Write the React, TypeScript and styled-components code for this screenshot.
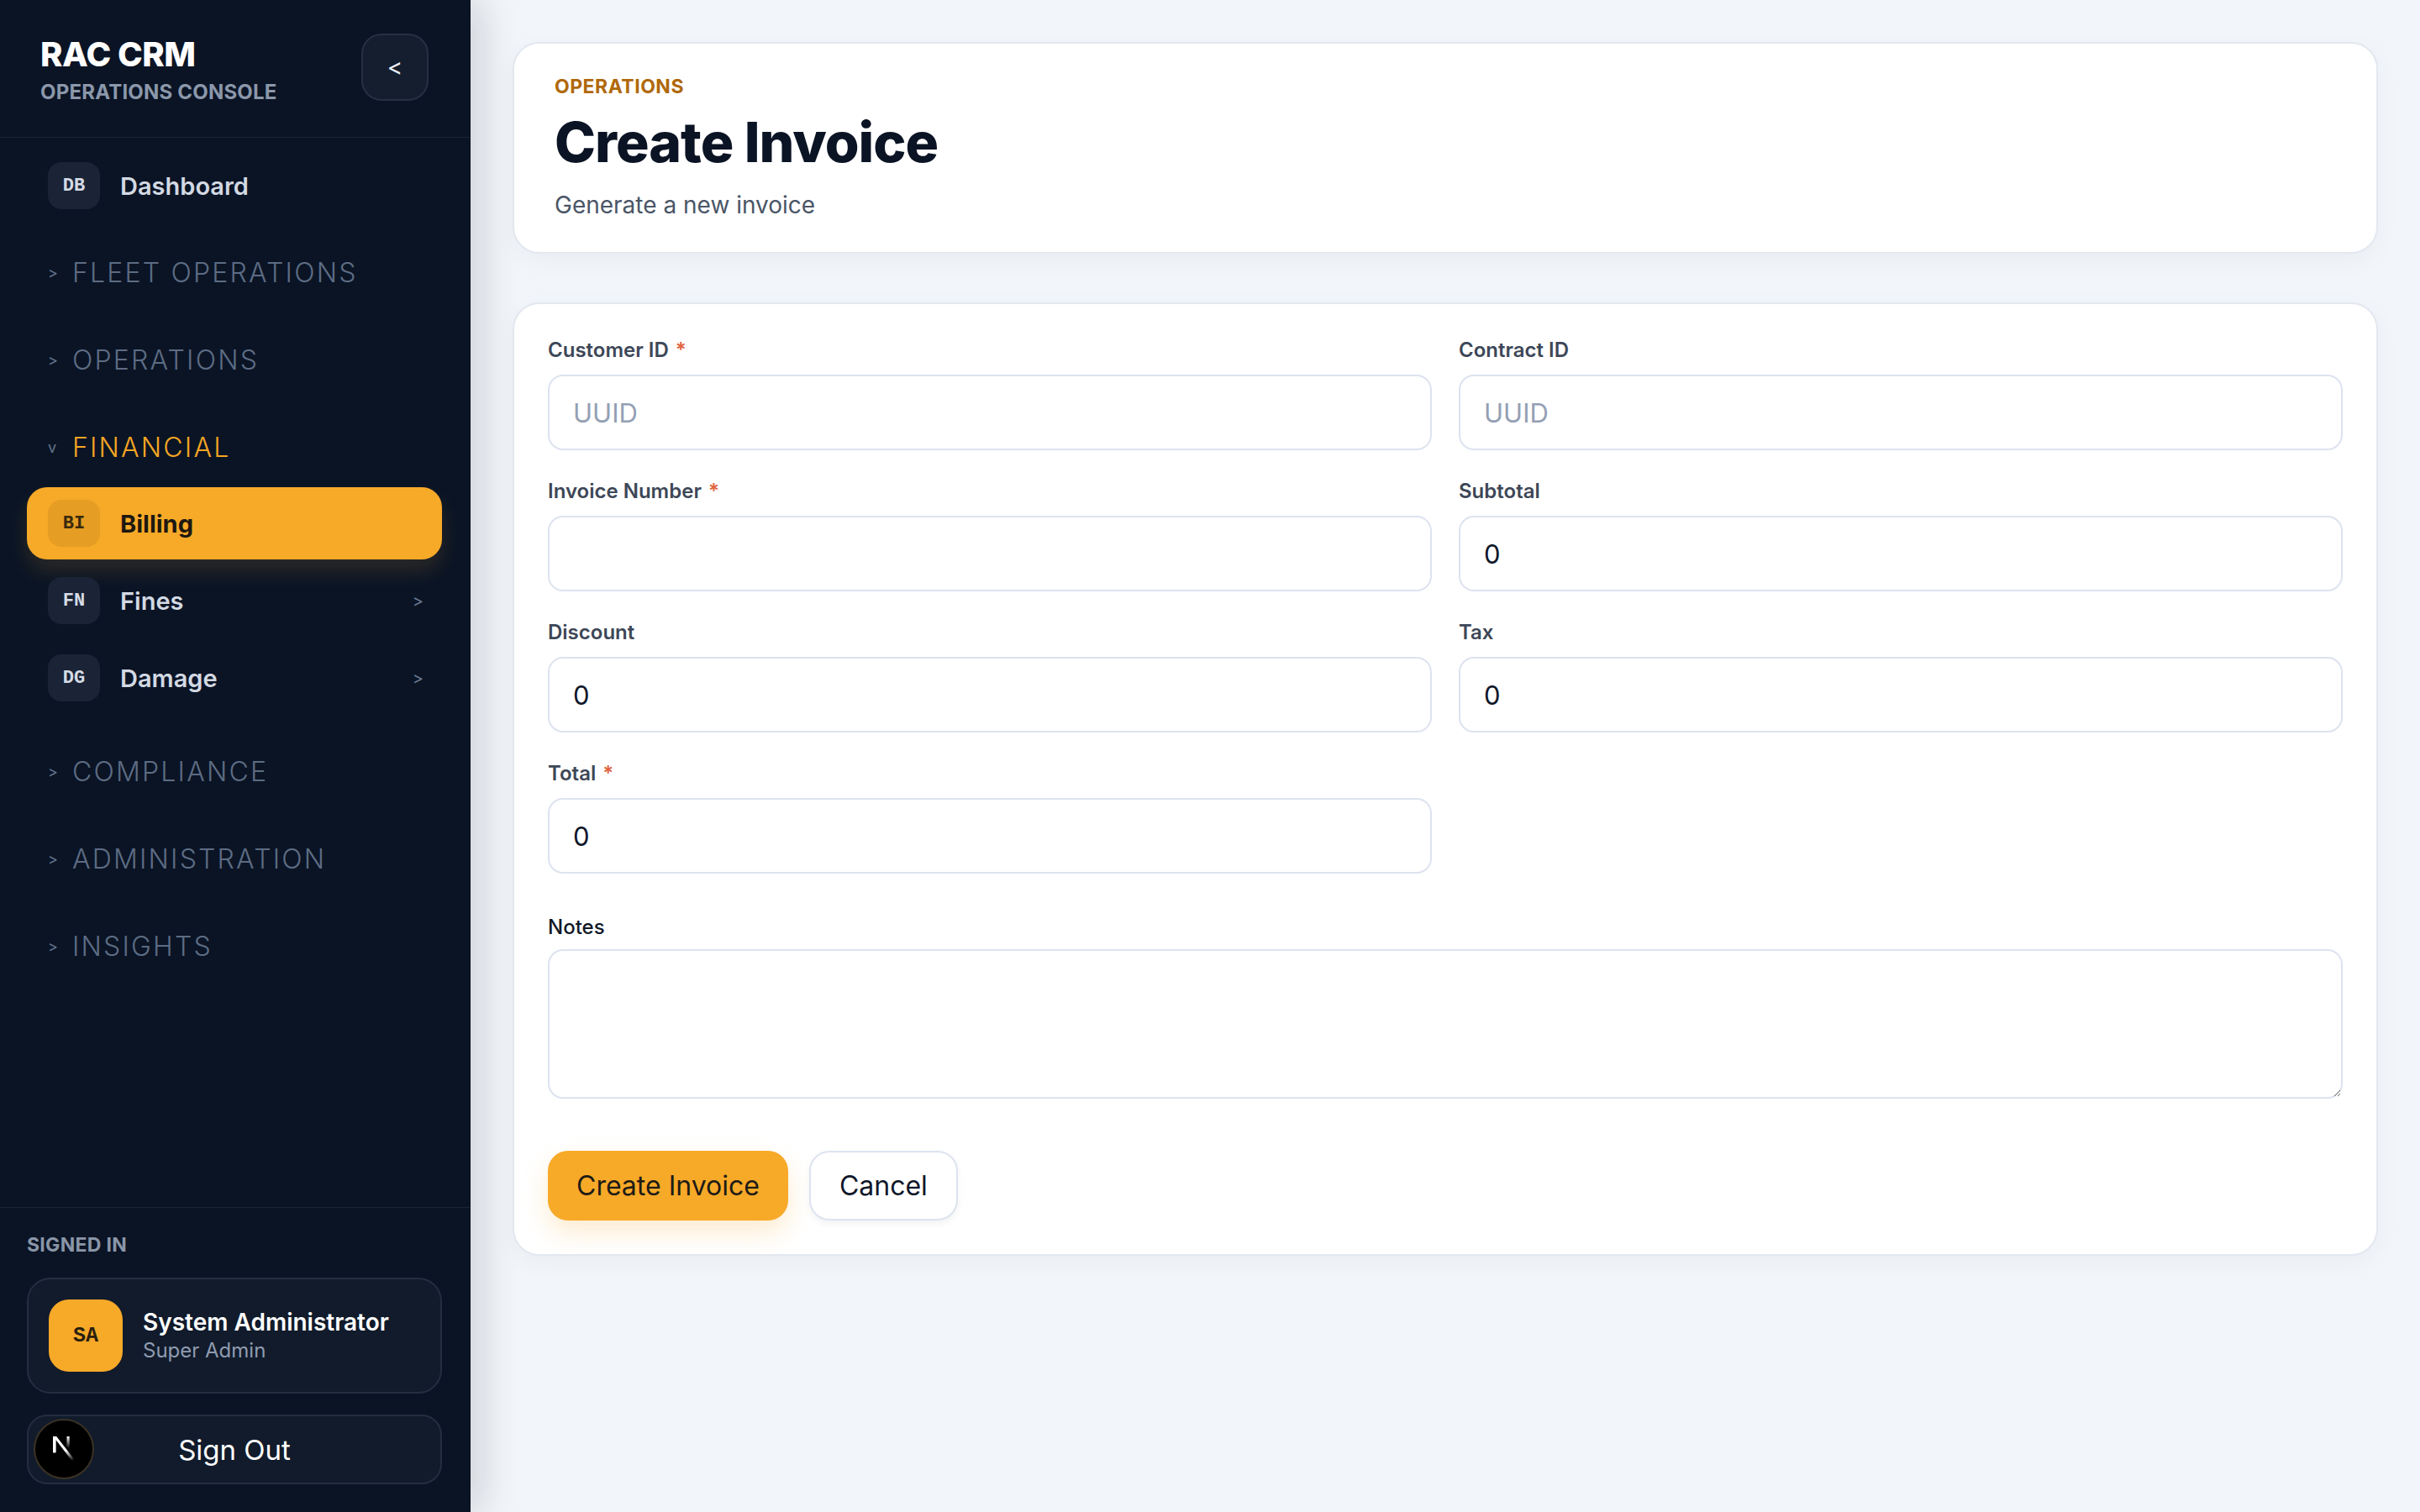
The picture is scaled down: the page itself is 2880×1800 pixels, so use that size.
import * as React from "react";
import styled, { createGlobalStyle, css } from "styled-components";

const GlobalStyle = createGlobalStyle`
	* {
		box-sizing: border-box;
	}

	html,
	body {
		margin: 0;
		padding: 0;
	}

	body {
		font-family: Inter, "Noto Sans", "Liberation Sans", sans-serif;
		background: #f2f5f9;
		color: #0f172a;
	}
`;

const Shell = styled.div`
	display: flex;
	min-height: 100vh;
`;

/* ---------- sidebar ---------- */

const Sidebar = styled.aside`
	position: relative;
	z-index: 1;
	width: 560px;
	height: 100vh;
	flex-shrink: 0;
	display: flex;
	flex-direction: column;
	background: #0a1425;
	box-shadow: 12px 0 44px rgba(15, 23, 42, 0.16);
`;

const SidebarHeader = styled.div`
	height: 164px;
	display: flex;
	align-items: flex-start;
	justify-content: space-between;
	padding: 40px 50px 0 48px;
	border-bottom: 1px solid #1b2536;
`;

const BrandTitle = styled.div`
	font-size: 40px;
	font-weight: 800;
	line-height: 50px;
	letter-spacing: -0.5px;
	color: #ffffff;
`;

const BrandSub = styled.div`
	margin-top: 4px;
	font-size: 24px;
	font-weight: 700;
	line-height: 32px;
	letter-spacing: 0.2px;
	color: #8b97aa;
`;

const CollapseButton = styled.button`
	width: 80px;
	height: 80px;
	border-radius: 24px;
	border: 2px solid #263044;
	background: #141e2f;
	color: #e8edf4;
	font-family: Inter, sans-serif;
	font-size: 28px;
	cursor: pointer;
`;

const Nav = styled.nav`
	flex: 1;
	display: flex;
	flex-direction: column;
	padding: 14px 34px 0 32px;
`;

const NavItem = styled.div<{ $active?: boolean }>`
	height: 86px;
	display: flex;
	align-items: center;
	gap: 24px;
	padding: 0 22px 0 25px;
	border-radius: 24px;
	background: ${(p) => (p.$active ? "#f7a928" : "transparent")};
	${(p) =>
		p.$active &&
		css`
			box-shadow: 0 14px 26px rgba(247, 169, 40, 0.14);
		`}
`;

const TopItem = styled(NavItem)`
	margin-bottom: 8px;
`;

const ItemBadge = styled.span<{ $active?: boolean }>`
	width: 62px;
	height: 56px;
	display: grid;
	place-items: center;
	border-radius: 16px;
	background: ${(p) => (p.$active ? "#e69d24" : "#1a2436")};
	color: ${(p) => (p.$active ? "#3a2a0c" : "#d5dbe5")};
	font-family: "Liberation Mono", "DejaVu Sans Mono", monospace;
	font-weight: 700;
	font-size: 22px;
`;

const ItemLabel = styled.span<{ $active?: boolean }>`
	flex: 1;
	font-size: 29px;
	font-weight: ${(p) => (p.$active ? 700 : 600)};
	color: ${(p) => (p.$active ? "#1d1810" : "#d3d9e3")};
`;

const ItemChevron = styled.span`
	font-size: 20px;
	color: #6b7890;
`;

const Group = styled.div<{ $open?: boolean }>`
	padding: ${(p) => (p.$open ? "24px 0 16px" : "24px 0")};
`;

const GroupHeader = styled.div<{ $open?: boolean }>`
	height: 56px;
	display: flex;
	align-items: center;
	padding-left: 25px;
	color: ${(p) => (p.$open ? "#f6a623" : "#5d6c83")};
`;

const Caret = styled.span`
	width: 29px;
	font-size: 18px;
	color: #66758c;
`;

const GroupTitle = styled.span`
	font-size: 32px;
	font-weight: 300;
	letter-spacing: 2.2px;
`;

const GroupItems = styled.div`
	display: flex;
	flex-direction: column;
	gap: 6px;
	padding-top: 20px;
`;

const SidebarFooter = styled.div`
	padding: 30px 34px 33px 32px;
	border-top: 1px solid #1b2536;
`;

const FooterLabel = styled.div`
	font-size: 23px;
	font-weight: 700;
	line-height: 28px;
	letter-spacing: 0.3px;
	color: #8a96a8;
`;

const UserCard = styled.div`
	height: 138px;
	margin-top: 25px;
	display: flex;
	align-items: center;
	gap: 24px;
	padding: 0 24px;
	border: 2px solid #232e40;
	border-radius: 28px;
	background: #111b2b;
`;

const Avatar = styled.div`
	width: 88px;
	height: 86px;
	display: grid;
	place-items: center;
	border-radius: 24px;
	background: #f7a928;
	color: #2a1f0e;
	font-family: "Liberation Mono", "DejaVu Sans Mono", monospace;
	font-weight: 700;
	font-size: 25px;
`;

const UserName = styled.div`
	font-size: 28px;
	font-weight: 600;
	line-height: 36px;
	color: #ffffff;
`;

const UserRole = styled.div`
	font-size: 24px;
	line-height: 32px;
	color: #8f9bb0;
`;

const SignOutButton = styled.button`
	width: 100%;
	height: 83px;
	margin-top: 25px;
	border: 2px solid #232e40;
	border-radius: 24px;
	background: #111b2b;
	color: #ffffff;
	font-family: Inter, sans-serif;
	font-size: 33px;
	cursor: pointer;
`;

const DevBadge = styled.div`
	position: fixed;
	left: 40px;
	bottom: 39px;
	z-index: 5;
	width: 72px;
	height: 72px;
	border-radius: 50%;
	background: #000;
	border: 2px solid #3b3224;
	display: grid;
	place-items: center;
`;

/* ---------- main ---------- */

const Main = styled.main`
	flex: 1;
	display: flex;
	flex-direction: column;
	gap: 58px;
	padding: 50px;
	background: #f2f5f9;
`;

const Card = styled.section`
	background: #ffffff;
	border: 2px solid #e3e8f0;
	border-radius: 32px;
	box-shadow: 0 8px 30px rgba(15, 23, 42, 0.04);
`;

const HeaderCard = styled(Card)`
	padding: 36px 48px 36px;
`;

const Eyebrow = styled.div`
	font-size: 23px;
	font-weight: 700;
	line-height: 30px;
	letter-spacing: 0.5px;
	color: #b0680b;
`;

const Title = styled.h1`
	margin: 12px 0 0;
	font-size: 66px;
	font-weight: 800;
	line-height: 78px;
	letter-spacing: -1px;
	color: #0b1424;
`;

const Subtitle = styled.p`
	margin: 16px 0 0;
	font-size: 28px;
	line-height: 40px;
	color: #4b5567;
`;

const FormCard = styled(Card)`
	padding: 40px;
`;

const FieldGrid = styled.div`
	display: grid;
	grid-template-columns: 1fr 1fr;
	column-gap: 32px;
	row-gap: 34px;
`;

const Field = styled.div`
	display: flex;
	flex-direction: column;
	gap: 14px;
`;

const NotesField = styled(Field)`
	gap: 11px;
	margin-top: 49px;
`;

const Label = styled.label<{ $plain?: boolean }>`
	font-size: 24px;
	line-height: 30px;
	font-weight: ${(p) => (p.$plain ? 500 : 600)};
	color: ${(p) => (p.$plain ? "#111827" : "#3d4757")};
`;

const Required = styled.span`
	margin-left: 8px;
	color: #e0643f;
`;

const fieldBase = css`
	width: 100%;
	border: 2px solid #dde3ef;
	border-radius: 18px;
	background: #ffffff;
	font-family: Inter, sans-serif;
	font-size: 31px;
	color: #0f172a;
	outline: none;

	&::placeholder {
		color: #94a0b4;
	}
`;

const TextInput = styled.input`
	${fieldBase};
	height: 90px;
	padding: 0 28px;
`;

const TextArea = styled.textarea`
	${fieldBase};
	height: 178px;
	padding: 20px 28px;
	resize: vertical;
`;

const Actions = styled.div`
	display: flex;
	gap: 25px;
	margin-top: 62px;
`;

const Button = styled.button<{ $primary?: boolean }>`
	height: 83px;
	padding: 0 34px;
	border-radius: 24px;
	font-family: Inter, sans-serif;
	font-size: 32px;
	cursor: pointer;
	${(p) =>
		p.$primary
			? css`
					border: none;
					background: #f7a928;
					color: #1e1b16;
					box-shadow: 0 14px 30px rgba(247, 169, 40, 0.22);
			  `
			: css`
					border: 2px solid #dde3ef;
					background: #ffffff;
					color: #0f172a;
					box-shadow: 0 4px 10px rgba(15, 23, 42, 0.05);
			  `}
`;

const collapsedGroups = ["FLEET OPERATIONS", "OPERATIONS"];
const lowerGroups = ["COMPLIANCE", "ADMINISTRATION", "INSIGHTS"];

const financialItems = [
	{ code: "BI", label: "Billing", active: true },
	{ code: "FN", label: "Fines", chevron: true },
	{ code: "DG", label: "Damage", chevron: true },
];

const fields = [
	{ label: "Customer ID", required: true, placeholder: "UUID" },
	{ label: "Contract ID", placeholder: "UUID" },
	{ label: "Invoice Number", required: true },
	{ label: "Subtotal", value: "0" },
	{ label: "Discount", value: "0" },
	{ label: "Tax", value: "0" },
	{ label: "Total", required: true, value: "0" },
];

const NextMark = () => (
	<svg width="30" height="30" viewBox="54 54 96 112" fill="none">
		<defs>
			<linearGradient id="nx-a" x1="109" y1="116.5" x2="144.5" y2="160.5" gradientUnits="userSpaceOnUse">
				<stop stopColor="white" />
				<stop offset="1" stopColor="white" stopOpacity="0" />
			</linearGradient>
			<linearGradient id="nx-b" x1="121" y1="54" x2="120.8" y2="106.9" gradientUnits="userSpaceOnUse">
				<stop stopColor="white" />
				<stop offset="1" stopColor="white" stopOpacity="0" />
			</linearGradient>
		</defs>
		<path d="M149.508 157.52L69.142 54H54V125.97H66.1136V69.3836L139.999 164.845C143.333 162.614 146.509 160.165 149.508 157.52Z" fill="url(#nx-a)" />
		<path d="M54 54H66.1V126H54Z" fill="white" />
		<rect x="115" y="54" width="12" height="72" fill="url(#nx-b)" />
	</svg>
);

const App = () => {
	return (
		<>
			<GlobalStyle />
			<Shell>
				<Sidebar>
					<SidebarHeader>
						<div>
							<BrandTitle>RAC CRM</BrandTitle>
							<BrandSub>OPERATIONS CONSOLE</BrandSub>
						</div>
						<CollapseButton>&lt;</CollapseButton>
					</SidebarHeader>

					<Nav>
						<TopItem>
							<ItemBadge>DB</ItemBadge>
							<ItemLabel>Dashboard</ItemLabel>
						</TopItem>

						{collapsedGroups.map((g) => (
							<Group key={g}>
								<GroupHeader>
									<Caret>&gt;</Caret>
									<GroupTitle>{g}</GroupTitle>
								</GroupHeader>
							</Group>
						))}

						<Group $open>
							<GroupHeader $open>
								<Caret>v</Caret>
								<GroupTitle>FINANCIAL</GroupTitle>
							</GroupHeader>
							<GroupItems>
								{financialItems.map((item) => (
									<NavItem key={item.code} $active={item.active}>
										<ItemBadge $active={item.active}>{item.code}</ItemBadge>
										<ItemLabel $active={item.active}>{item.label}</ItemLabel>
										{item.chevron && <ItemChevron>&gt;</ItemChevron>}
									</NavItem>
								))}
							</GroupItems>
						</Group>

						{lowerGroups.map((g) => (
							<Group key={g}>
								<GroupHeader>
									<Caret>&gt;</Caret>
									<GroupTitle>{g}</GroupTitle>
								</GroupHeader>
							</Group>
						))}
					</Nav>

					<SidebarFooter>
						<FooterLabel>SIGNED IN</FooterLabel>
						<UserCard>
							<Avatar>SA</Avatar>
							<div>
								<UserName>System Administrator</UserName>
								<UserRole>Super Admin</UserRole>
							</div>
						</UserCard>
						<SignOutButton>Sign Out</SignOutButton>
					</SidebarFooter>
				</Sidebar>

				<Main>
					<HeaderCard>
						<Eyebrow>OPERATIONS</Eyebrow>
						<Title>Create Invoice</Title>
						<Subtitle>Generate a new invoice</Subtitle>
					</HeaderCard>

					<FormCard>
						<FieldGrid>
							{fields.map((f) => (
								<Field key={f.label}>
									<Label>
										{f.label}
										{f.required && <Required>*</Required>}
									</Label>
									<TextInput placeholder={f.placeholder} defaultValue={f.value} />
								</Field>
							))}
						</FieldGrid>

						<NotesField>
							<Label $plain>Notes</Label>
							<TextArea />
						</NotesField>

						<Actions>
							<Button $primary>Create Invoice</Button>
							<Button>Cancel</Button>
						</Actions>
					</FormCard>
				</Main>
			</Shell>

			<DevBadge>
				<NextMark />
			</DevBadge>
		</>
	);
};

export default App;
